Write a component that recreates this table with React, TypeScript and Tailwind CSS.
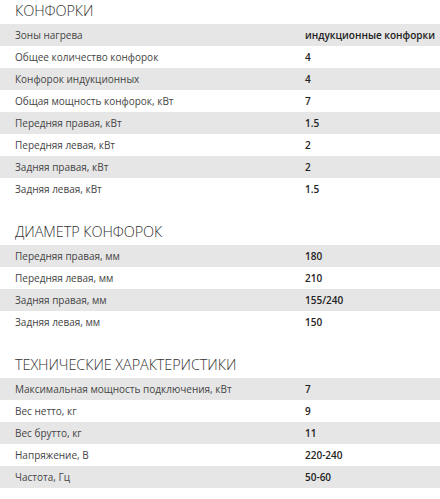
import React from 'react';

type Row = [string, string];

const sections: { title: string; rows: Row[] }[] = [
  {
    title: 'КОНФОРКИ',
    rows: [
      ['Зоны нагрева', 'индукционные конфорки'],
      ['Общее количество конфорок', '4'],
      ['Конфорок индукционных', '4'],
      ['Общая мощность конфорок, кВт', '7'],
      ['Передняя правая, кВт', '1.5'],
      ['Передняя левая, кВт', '2'],
      ['Задняя правая, кВт', '2'],
      ['Задняя левая, кВт', '1.5'],
    ],
  },
  {
    title: 'ДИАМЕТР КОНФОРОК',
    rows: [
      ['Передняя правая, мм', '180'],
      ['Передняя левая, мм', '210'],
      ['Задняя правая, мм', '155/240'],
      ['Задняя левая, мм', '150'],
    ],
  },
  {
    title: 'ТЕХНИЧЕСКИЕ ХАРАКТЕРИСТИКИ',
    rows: [
      ['Максимальная мощность подключения, кВт', '7'],
      ['Вес нетто, кг', '9'],
      ['Вес брутто, кг', '11'],
      ['Напряжение, В', '220-240'],
      ['Частота, Гц', '50-60'],
    ],
  },
];

export default function App() {
  return (
    <div className="w-[440px] bg-white font-['Open_Sans',Arial,sans-serif]">
      {sections.map((section, si) => (
        <div key={section.title} className={si === 0 ? '' : 'mt-[21px]'}>
          {/* Section heading */}
          <h3 className="h-6 pl-[15px] text-[14.5px] leading-[22px] text-[#333] font-light tracking-[-0.1px]">
            {section.title}
          </h3>
          {section.rows.map(([label, value], i) => (
            <div
              key={label}
              className={`flex h-[22px] items-center text-[10px] whitespace-nowrap ${
                i % 2 === 0 ? 'bg-[#e6e6e6]' : 'bg-white'
              }`}
            >
              <span className="w-[305px] shrink-0 pl-[15px] text-[#444]">{label}</span>
              <span className="font-semibold text-[#222]">{value}</span>
            </div>
          ))}
        </div>
      ))}
    </div>
  );
}
